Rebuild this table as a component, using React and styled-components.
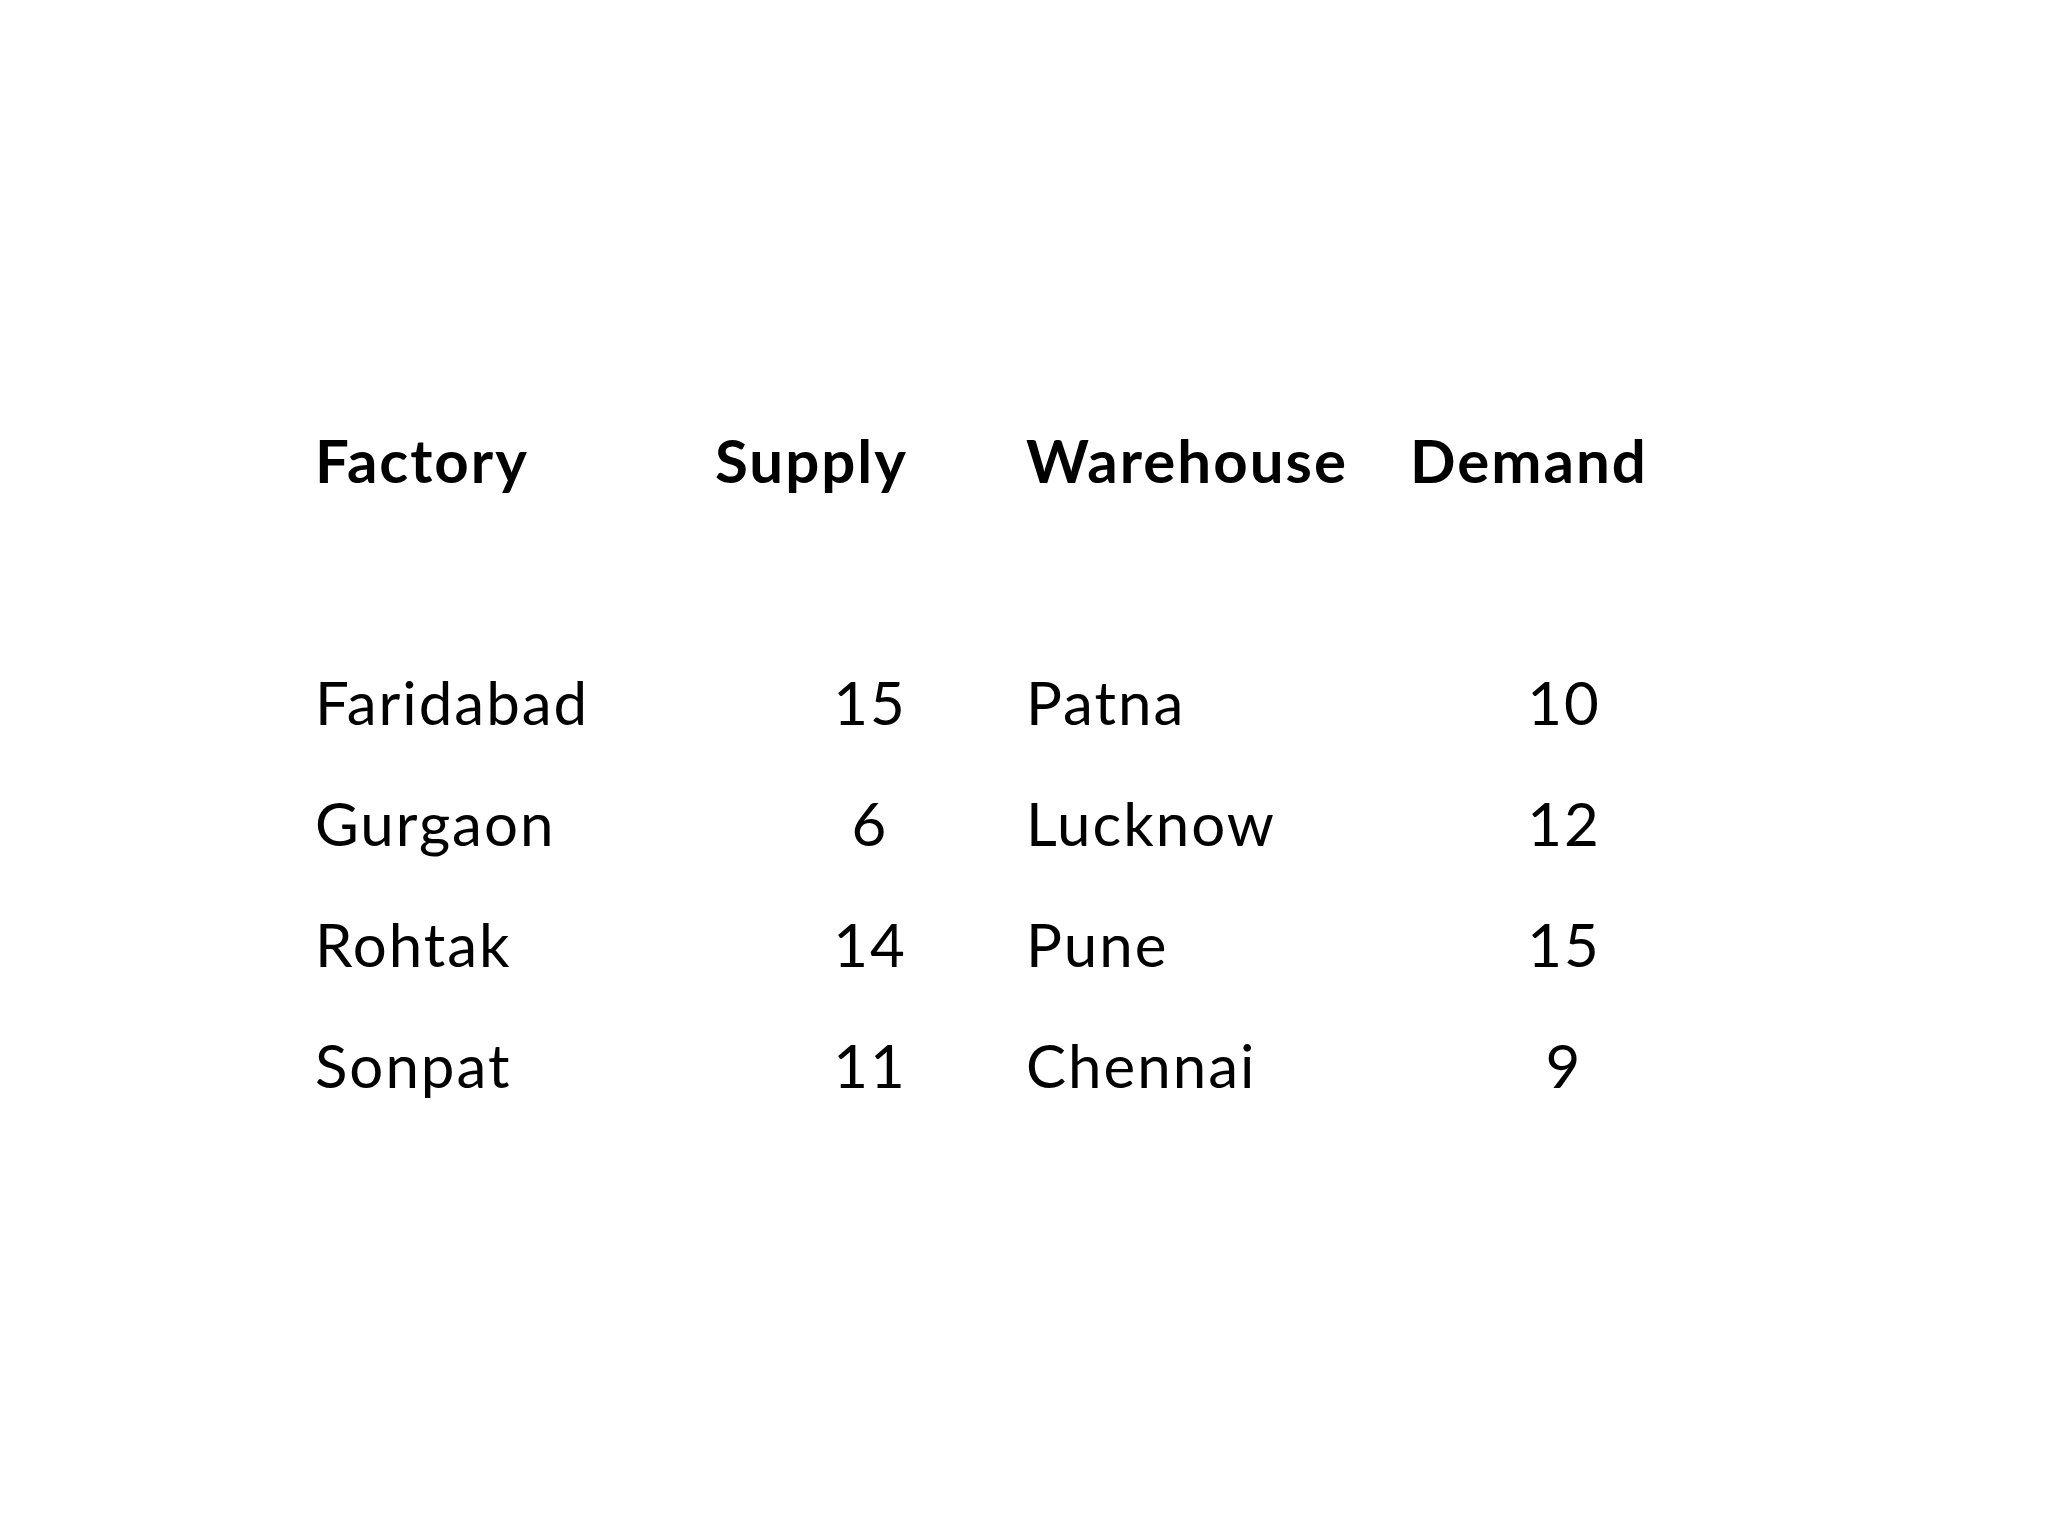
import React from 'react';
import styled, { createGlobalStyle } from 'styled-components';

const factories = [
  { name: 'Faridabad', supply: 15 },
  { name: 'Gurgaon', supply: 6 },
  { name: 'Rohtak', supply: 14 },
  { name: 'Sonpat', supply: 11 },
];

const warehouses = [
  { name: 'Patna', demand: 10 },
  { name: 'Lucknow', demand: 12 },
  { name: 'Pune', demand: 15 },
  { name: 'Chennai', demand: 9 },
];

function App() {
  return (
    <>
      <GlobalStyle />
      <Slide>
        <Table>
          <HeadRow>
            <Cell>Factory</Cell>
            <Cell>Supply</Cell>
            <Cell>Warehouse</Cell>
            <Cell>Demand</Cell>
          </HeadRow>
          {factories.map((f, i) => (
            <Row key={f.name}>
              <Cell>{f.name}</Cell>
              <Value $width={310}>{f.supply}</Value>
              <Cell>{warehouses[i].name}</Cell>
              <Value $width={308}>{warehouses[i].demand}</Value>
            </Row>
          ))}
        </Table>
      </Slide>
    </>
  );
}

const GlobalStyle = createGlobalStyle`
  html, body {
    margin: 0;
    padding: 0;
    background: #ffffff;
  }
`;

const Slide = styled.div`
  width: 2048px;
  height: 1536px;
  box-sizing: border-box;
  padding: 400px 0 0 315px;
  background: #ffffff;
  color: #000000;
  font-family: Lato, 'Liberation Sans', sans-serif;
`;

const Table = styled.div`
  display: flex;
  flex-direction: column;
`;

const Row = styled.div`
  display: grid;
  grid-template-columns: 400px 311px 384px 320px;
  font-size: 60px;
  line-height: 121px;
  letter-spacing: 2px;
`;

const HeadRow = styled(Row)`
  font-weight: 700;
  margin-bottom: 121px;
`;

const Cell = styled.div`
  white-space: nowrap;
`;

const Value = styled.div`
  width: ${(p) => p.$width}px;
  text-align: center;
`;

export default App;
